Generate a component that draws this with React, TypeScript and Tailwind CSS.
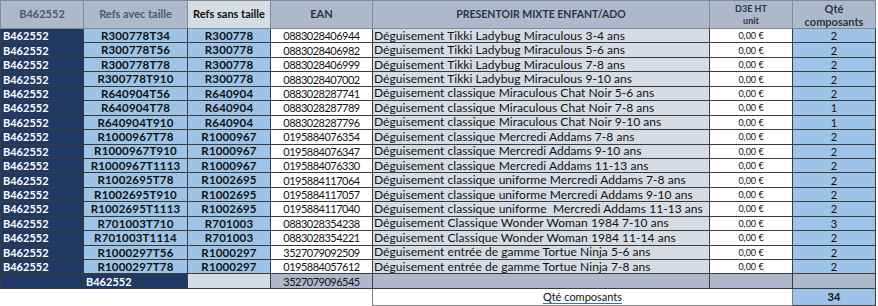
const rows: [string, string, string, string, string][] = [
  ["R300778T34", "R300778", "0883028406944", "Déguisement Tikki Ladybug Miraculous 3-4 ans", "2"],
  ["R300778T56", "R300778", "0883028406982", "Déguisement Tikki Ladybug Miraculous 5-6 ans", "2"],
  ["R300778T78", "R300778", "0883028406999", "Déguisement Tikki Ladybug Miraculous 7-8 ans", "2"],
  ["R300778T910", "R300778", "0883028407002", "Déguisement Tikki Ladybug Miraculous 9-10 ans", "2"],
  ["R640904T56", "R640904", "0883028287741", "Déguisement classique Miraculous Chat Noir 5-6 ans", "2"],
  ["R640904T78", "R640904", "0883028287789", "Déguisement classique Miraculous Chat Noir 7-8 ans", "1"],
  ["R640904T910", "R640904", "0883028287796", "Déguisement classique Miraculous Chat Noir 9-10 ans", "1"],
  ["R1000967T78", "R1000967", "0195884076354", "Déguisement classique Mercredi Addams 7-8 ans", "2"],
  ["R1000967T910", "R1000967", "0195884076347", "Déguisement classique Mercredi Addams 9-10 ans", "2"],
  ["R1000967T1113", "R1000967", "0195884076330", "Déguisement classique Mercredi Addams 11-13 ans", "2"],
  ["R1002695T78", "R1002695", "0195884117064", "Déguisement classique uniforme Mercredi Addams 7-8 ans", "2"],
  ["R1002695T910", "R1002695", "0195884117057", "Déguisement classique uniforme Mercredi Addams 9-10 ans", "2"],
  ["R1002695T1113", "R1002695", "0195884117040", "Déguisement classique uniforme  Mercredi Addams 11-13 ans", "2"],
  ["R701003T710", "R701003", "0883028354238", "Déguisement Classique Wonder Woman 1984 7-10 ans", "3"],
  ["R701003T1114", "R701003", "0883028354221", "Déguisement Classique Wonder Woman 1984 11-14 ans", "2"],
  ["R1000297T56", "R1000297", "3527079092509", "Déguisement entrée de gamme Tortue Ninja 5-6 ans", "2"],
  ["R1000297T78", "R1000297", "0195884057612", "Déguisement entrée de gamme Tortue Ninja 7-8 ans", "2"],
];

// excel-like cell base
const cell = "border border-[#3b3b3b] p-0 leading-none whitespace-pre overflow-hidden";
const refText = "font-bold text-center text-[11.5px] tracking-[0.15px]";
const eanText = "text-center tracking-[-0.5px]";

export default function App() {
  return (
    <div
      className="w-[878px] h-[306px] bg-white overflow-hidden text-[11px] text-[#111]"
      style={{ fontFamily: "Lato, 'Liberation Sans', sans-serif" }}
    >
      <table className="border-collapse table-fixed w-[875px]">
        <colgroup>
          <col className="w-[83px]" />
          <col className="w-[104px]" />
          <col className="w-[83px]" />
          <col className="w-[102px]" />
          <col className="w-[337px]" />
          <col className="w-[83px]" />
          <col className="w-[83px]" />
        </colgroup>
        <thead>
          <tr className="h-[28px] font-bold">
            <th className="border border-[#7f8a99] bg-[#adb9ca] text-[#50596a] font-bold text-center">B462552</th>
            <th className="border border-[#7f8a99] bg-[#adb9ca] text-[#50596a] font-bold text-center">Refs avec taille</th>
            <th className="border border-[#7f8a99] bg-[#d6dce4] text-[#111] font-bold text-center">Refs sans taille</th>
            <th className="border border-[#7f8a99] bg-[#adb9ca] text-[#2e3440] font-bold text-center">EAN</th>
            <th className="border border-[#7f8a99] bg-[#adb9ca] text-[#2e3440] font-bold text-center text-[10.5px]">
              PRESENTOIR MIXTE ENFANT/ADO
            </th>
            <th className="border border-[#7f8a99] bg-[#adb9ca] text-[#2e3440] font-bold text-center text-[9px] leading-[12px]">
              D3E HT
              <br />
              unit
            </th>
            <th className="border border-[#7f8a99] bg-[#adb9ca] text-[#2e3440] font-bold text-center leading-[13px]">
              Qté
              <br />
              composants
            </th>
          </tr>
        </thead>
        <tbody>
          {rows.map(([ref, base, ean, label, qty]) => (
            <tr key={ref} className="h-[14.45px]">
              <td className={`${cell} bg-[#1f3864] text-white font-bold pl-[2px] text-left`}>B462552</td>
              <td className={`${cell} bg-[#9dc3e6] ${refText}`}>{ref}</td>
              <td className={`${cell} bg-[#9dc3e6] ${refText}`}>{base}</td>
              <td className={`${cell} bg-white ${eanText}`}>{ean}</td>
              <td className={`${cell} bg-[#d6dce4] text-left pl-[1px] text-[12px] tracking-[0.05px]`}>{label}</td>
              <td className={`${cell} bg-white text-center text-[9px]`}>0,00 €</td>
              <td className={`${cell} bg-[#9dc3e6] text-center`}>{qty}</td>
            </tr>
          ))}
          <tr className="h-[14.45px]">
            <td className={`${cell} bg-[#1f3864]`}></td>
            <td className={`${cell} bg-[#1f3864] text-white font-bold pl-[2px] text-left`}>B462552</td>
            <td className={`${cell} bg-[#d6dce4]`}></td>
            <td className={`${cell} bg-[#adb9ca] ${eanText}`}>3527079096545</td>
            <td className={`${cell} bg-[#adb9ca]`}></td>
            <td className={`${cell} bg-[#adb9ca]`}></td>
            <td className={`${cell} bg-[#adb9ca]`}></td>
          </tr>
          <tr className="h-[17px]">
            <td className="p-0 border-0"></td>
            <td className="p-0 border-0"></td>
            <td className="p-0 border-0"></td>
            <td className="p-0 border-0 border-r border-r-[#7f7f7f]"></td>
            <td colSpan={2} className="p-0 border border-[#7f7f7f] bg-white text-center">
              <span className="underline underline-offset-2 decoration-[#2f6fd6]">Qté composants</span>
            </td>
            <td className="p-0 border border-[#3b3b3b] bg-[#9dc3e6] text-center font-bold">34</td>
          </tr>
        </tbody>
      </table>
    </div>
  );
}
